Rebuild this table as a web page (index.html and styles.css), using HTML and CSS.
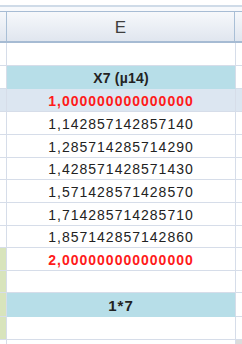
FILE: index.html
```html
<!DOCTYPE html>
<html>
<head>
<meta charset="utf-8">
<link rel="stylesheet" href="styles.css">
</head>
<body>
<div class="sheet">
  <div class="gap5"></div>
  <div class="line-a"></div>
  <div class="gap4"></div>
  <div class="line-b"></div>
  <div class="head">
    <div class="hl"></div>
    <div class="hc">E</div>
    <div class="hr"></div>
  </div>
  <div class="row h23"><div class="cl"></div><div class="cc"></div><div class="cr"></div></div>
  <div class="row h23"><div class="cl"></div><div class="cc cyan bold title">X7 (µ14)</div><div class="cr"></div></div>
  <div class="row h23 sel"><div class="cl"></div><div class="cc red bold num">1,000000000000000</div><div class="cr"></div></div>
  <div class="row h23"><div class="cl"></div><div class="cc num">1,142857142857140</div><div class="cr"></div></div>
  <div class="row h23"><div class="cl"></div><div class="cc num">1,285714285714290</div><div class="cr"></div></div>
  <div class="row h22"><div class="cl"></div><div class="cc num">1,428571428571430</div><div class="cr"></div></div>
  <div class="row h23"><div class="cl"></div><div class="cc num">1,571428571428570</div><div class="cr"></div></div>
  <div class="row h23"><div class="cl"></div><div class="cc num">1,714285714285710</div><div class="cr"></div></div>
  <div class="row h22"><div class="cl"></div><div class="cc num">1,857142857142860</div><div class="cr"></div></div>
  <div class="row h23"><div class="cl green"></div><div class="cc red bold num">2,000000000000000</div><div class="cr"></div></div>
  <div class="row h22"><div class="cl green"></div><div class="cc"></div><div class="cr"></div></div>
  <div class="row h24"><div class="cl green"></div><div class="cc cyan bold short">1*7</div><div class="cr"></div></div>
  <div class="row h23"><div class="cl green"></div><div class="cc"></div><div class="cr"></div></div>
  <div class="row h5"><div class="cl nob"></div><div class="cc nob"></div><div class="cr nob gray"></div></div>
</div>
</body>
</html>
```

FILE: styles.css
```css
html, body {
  margin: 0;
  padding: 0;
  background: #ffffff;
}
.sheet {
  width: 242px;
  height: 344px;
  overflow: hidden;
  font-family: "Liberation Sans", Arial, sans-serif;
  color: #222222;
}
.gap5 { height: 5px; }
.line-a { height: 2px; background: #cfdbe8; }
.gap4 { height: 4px; background: #f7f9fc; }
.line-b { height: 1px; background: #a7bcd4; }
.head {
  display: flex;
  height: 29px;
  border-bottom: 2px solid #a6bbd3;
  background: linear-gradient(#f6f8fb, #e0e6ef);
}
.hl, .hc {
  border-right: 1px solid #a9bfd6;
}
.hl { width: 6px; }
.hc {
  width: 228px;
  display: flex;
  align-items: center;
  justify-content: center;
  font-size: 17px;
  color: #3e3e3e;
  padding-top: 2px;
  box-sizing: border-box;
}
.hr { flex: 1; }
.row {
  display: flex;
}
.h22 { height: 22px; }
.h23 { height: 23px; }
.h24 { height: 24px; }
.h5 { height: 5px; }
.cl, .cc, .cr {
  border-bottom: 1px solid #d6dde9;
  box-sizing: border-box;
}
.cl {
  width: 7px;
  border-right: 1px solid #d6dde9;
}
.cc {
  width: 229px;
  border-right: 1px solid #d6dde9;
  display: flex;
  align-items: center;
  justify-content: center;
  font-size: 14px;
  padding-top: 1px;
}
.cr { flex: 1; }
.nob { border-bottom: none; }
.gray { background: #dcdcdc; }
.num { letter-spacing: 1px; }
.title { letter-spacing: 0.2px; }
.short { letter-spacing: 1px; font-size: 15px; }
.bold { font-weight: bold; }
.red { color: #ff1a1a; }
.cyan {
  background: #b7dee8;
  border-bottom-color: #b7dee8;
}
.sel { background: #dce6f1; }
.green { background: #d8e4bc; }
```
